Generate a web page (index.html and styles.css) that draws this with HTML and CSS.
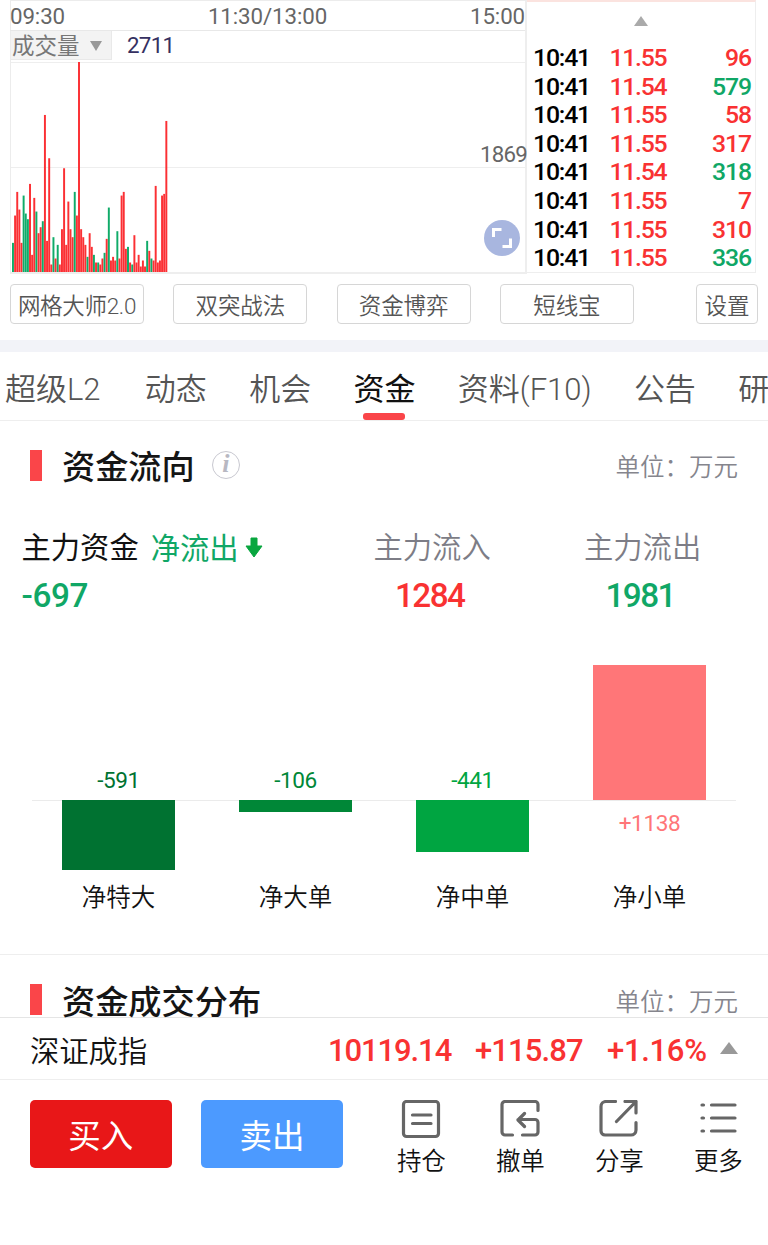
FILE: index.html
```html
<!DOCTYPE html>
<html lang="zh-CN">
<head>
    <meta charset="utf-8">
    <meta name="viewport" content="width=device-width, initial-scale=1">
    <title>资金</title>
    <link rel="stylesheet" href="styles.css">
</head>
<body>
<div class="quote">
    <div class="chart">
        <div class="axis"><span>09:30</span><span>11:30/13:00</span><span>15:00</span></div>
        <div class="vol-head">
            <div class="vol-select">成交量<i class="tri down"></i></div>
            <span class="vol-now">2711</span>
        </div>
        <div class="vol-plot">
            <svg class="vol-bars" id="volBars" viewBox="0 0 155.500 632" preserveAspectRatio="none"></svg>
            <span class="vol-mid">1869</span>
            <div class="expand">
                <svg width="20" height="20" viewBox="0 0 20 20"><path d="M1.500 9V1.500H9.500M18.500 10.500V18.500H10.500" fill="none" stroke="#fff" stroke-width="3"/></svg>
            </div>
        </div>
    </div>
    <div class="ticks">
        <div class="ticks-up"><i class="tri up"></i></div>
        <div class="tick"><span>10:41</span><b>11.55</b><em class="red">96</em></div>
        <div class="tick"><span>10:41</span><b>11.54</b><em class="green">579</em></div>
        <div class="tick"><span>10:41</span><b>11.55</b><em class="red">58</em></div>
        <div class="tick"><span>10:41</span><b>11.55</b><em class="red">317</em></div>
        <div class="tick"><span>10:41</span><b>11.54</b><em class="green">318</em></div>
        <div class="tick"><span>10:41</span><b>11.55</b><em class="red">7</em></div>
        <div class="tick"><span>10:41</span><b>11.55</b><em class="red">310</em></div>
        <div class="tick"><span>10:41</span><b>11.55</b><em class="green">336</em></div>
    </div>
</div>

<div class="tools">
    <div class="tool">网格大师2.0</div>
    <div class="tool">双突战法</div>
    <div class="tool">资金博弈</div>
    <div class="tool">短线宝</div>
    <div class="tool setting">设置</div>
</div>

<div class="tabs">
    <div class="tab">超级L2</div>
    <div class="tab">动态</div>
    <div class="tab">机会</div>
    <div class="tab active">资金</div>
    <div class="tab">资料(F10)</div>
    <div class="tab">公告</div>
    <div class="tab">研</div>
</div>

<div class="section flow">
    <div class="section-head">
        <h2>资金流向</h2>
        <div class="info">i</div>
        <span class="unit">单位：万元</span>
    </div>
    <div class="summary">
        <div class="main-net">
            <div class="label">主力资金<span class="net-out">净流出</span><svg width="18" height="21" viewBox="0 0 18 21"><path d="M6 1h6v8h5L9 20 1 9h5z" fill="#08a63f" stroke="#08a63f" stroke-linejoin="round"/></svg></div>
            <div class="num green">-697</div>
        </div>
        <div class="main-in">
            <div class="label">主力流入</div>
            <div class="num red">1284</div>
        </div>
        <div class="main-out">
            <div class="label">主力流出</div>
            <div class="num green">1981</div>
        </div>
    </div>
    <div class="bars">
        <div class="col neg c1"><span>-591</span><div class="bar" style="height:70px"></div></div>
        <div class="col neg c2"><span>-106</span><div class="bar" style="height:12.500px"></div></div>
        <div class="col neg c3"><span>-441</span><div class="bar" style="height:52.500px"></div></div>
        <div class="col pos c4"><div class="bar" style="height:134.500px"></div><span>+1138</span></div>
    </div>
    <div class="bar-names"><span>净特大</span><span>净大单</span><span>净中单</span><span>净小单</span></div>
</div>

<div class="section dist">
    <div class="section-head">
        <h2>资金成交分布</h2>
        <span class="unit">单位：万元</span>
    </div>
</div>

<div class="index-bar">
    <span class="index-name">深证成指</span>
    <span class="index-price">10119.14</span>
    <span class="index-diff">+115.87</span>
    <span class="index-pct">+1.16%</span>
    <i class="tri up"></i>
</div>

<div class="actions">
    <div class="btn buy">买入</div>
    <div class="btn sell">卖出</div>
    <div class="act">
        <svg viewBox="0 0 40 40"><rect x="2.500" y="1.500" width="35" height="35" rx="3"/><path d="M11.500 15H30M11.500 23.500H30"/></svg>
        <span>持仓</span>
    </div>
    <div class="act">
        <svg viewBox="0 0 40 40"><path d="M38 10.500V4.500a3 3 0 0 0-3-3H5a3 3 0 0 0-3 3V32a3 3 0 0 0 3 3h7.500M22.500 35H35a3 3 0 0 0 3-3V22.500a3 3 0 0 0-3-3H18M24.500 13.500L18 20l6.500 6.500"/></svg>
        <span>撤单</span>
    </div>
    <div class="act">
        <svg viewBox="0 0 40 40"><path d="M16.500 1.500H7a5 5 0 0 0-5 5V31a4 4 0 0 0 4 4H32a5 5 0 0 0 5-5V22.500M26 1.500H37V13M37 1.500L17.500 21.500"/></svg>
        <span>分享</span>
    </div>
    <div class="act">
        <svg viewBox="0 0 40 40"><path d="M4 5h1.500M13.500 5H37M4 18h1.500M13.500 18H37M4 31h1.500M13.500 31H37"/></svg>
        <span>更多</span>
    </div>
</div>

<script type="text/javascript">
    // one entry per bar, negative = falling (green)
    var volumes = [
        -89,171,242,189,89,-231,-177,-160,266,53,224,-183,118,136,-154,473,95,343,24,-106,
        42,-83,24,130,313,83,213,130,106,-242,171,632,130,106,83,-47,118,77,-53,30,
        -30,24,42,-59,101,-195,36,47,36,-124,42,231,242,71,-77,30,-24,112,30,53,
        18,36,18,-95,65,-42,36,260,30,36,231,236,455
    ];
    var step = 2.13;
    document.getElementById('volBars').innerHTML = volumes.map(function(v, i){
        var h = Math.abs(v);
        return '<rect class="' + (v < 0 ? 'fall' : 'rise') + '" x="' + (i * step).toFixed(2) + '" y="' + (632 - h) + '" width="1.95" height="' + h + '"/>';
    }).join('');
</script>
</body>
</html>
```
FILE: styles.css
```css
* {box-sizing:border-box;}
body {margin:0; width:768px; height:1245px; overflow:hidden; background:#fff; color:#111; font-family:Roboto,"Noto Sans CJK SC",sans-serif; font-size:24.5px; white-space:nowrap;}
i, em {font-style:normal;}
.red {color:#f93232;}
.green {color:#10a766;}
.tri {display:inline-block; border:7px solid transparent;}
.tri.up {border-top:0; border-bottom:10px solid #aaa;}
.tri.down {border-bottom:0; border-top:10px solid #999;}

.quote {display:flex; height:274px; padding-left:10px;}
.chart {width:517px; border:1px solid #ececec; border-right:2px solid #eee; border-bottom:2px solid #eee;}
.axis {display:flex; justify-content:space-between; height:30px; line-height:31px; font-size:22.3px; letter-spacing:-.1px; color:#666; border-bottom:1px solid #e8e8e8; margin:0 0 0 -1px;}
.vol-head {display:flex; height:32px; border-bottom:1px solid #eee;}
.vol-select {width:101px; height:29px; background:#f3f3f3; border-right:1px solid #e9e9e9; border-bottom:1px solid #e9e9e9; line-height:30px; font-size:22.5px; color:#777; padding-left:1px;}
.vol-select .tri {margin-left:10px; border-left-width:6px; border-right-width:6px; vertical-align:3px;}
.vol-now {margin-left:15px; line-height:29px; font-size:22.3px; font-weight:450; letter-spacing:-.7px; color:#353061;}
.vol-plot {position:relative; height:209px; background:linear-gradient(#eee,#eee) 0 104px/100% 1px no-repeat;}
.vol-bars {position:absolute; left:1px; bottom:0; width:155.500px; height:210.500px;}
.rise {fill:#fb3034;}
.fall {fill:#10ab69;}
.vol-mid {position:absolute; right:-2px; top:77px; line-height:28px; font-size:22.3px; letter-spacing:-.8px; color:#666;}
.expand {position:absolute; right:5px; top:157px; width:36px; height:36px; border-radius:50%; background:#a8b6df; display:flex; align-items:center; justify-content:center;}

.ticks {width:229px; border-top:2px solid #fbe3df; border-right:1px solid #eee; border-bottom:1px solid #eee; padding:0 4px 0 6px; height:273px;}
.ticks-up {height:42px; padding:14px 0 0 101px; line-height:0;}
.tick {display:flex; height:28.600px; line-height:28px; font-size:24.8px; font-weight:500;}
.tick span {width:76.500px; letter-spacing:-1.2px; color:#000;}
.tick b {font-weight:500; letter-spacing:-1.3px; color:#f93232;}
.tick em {margin-left:auto; letter-spacing:-1.1px;}

.tools {display:flex; gap:29.300px; padding:10px 10px 0; height:65.500px;}
.tool {width:134px; height:40px; border:1.500px solid #d6d6d6; border-radius:4px; text-align:center; line-height:42px; font-size:22.5px; font-weight:350; letter-spacing:-.1px; color:#555;}
.tool:first-child {letter-spacing:-.3px;}
.setting {width:62px; margin-left:auto;}

.tabs {display:flex; gap:42.300px; height:81px; border-top:12px solid #f2f3f8; border-bottom:1px solid #eee; padding-left:5px;}
.tab {flex:none; display:flex; flex-direction:column; align-items:center; line-height:75px; height:68px; font-size:31px; font-weight:350; color:#555;}
.tab:first-child {margin-right:2px;}
.tab.active {color:#111; font-weight:400;}
.active::after {content:""; width:42px; height:7px; border-radius:3px; background:#fa4549; margin-top:-14px;}

.section-head {display:flex; align-items:center; padding:0 30px; height:32px;}
.section-head::before {content:""; width:12px; height:31px; background:#fa4549; margin-right:20px;}
h2 {margin:0; font-size:33.2px; font-weight:500; line-height:36px; padding-top:6px; color:#151515;}
.info {width:28px; height:28px; margin-left:17px; border:1.500px solid #c8c8d0; border-radius:50%; text-align:center; font:italic bold 26px/24px "Liberation Serif",serif; color:#b8b8c2;}
.unit {margin-left:auto; padding-top:1px; font-weight:350; color:#85858d;}
.flow {height:534px; padding-top:28.500px; border-bottom:1px solid #eee;}
.summary {display:flex; padding:47.500px 21.500px 0; font-size:29.3px;}
.label {display:flex; align-items:center; height:38px; line-height:38px;}
.net-out {color:#10a766; margin:2px 6px 0 12px;}
.main-net {width:352px;}
.main-in {width:210.500px;}
.main-in .label, .main-out .label {font-weight:350; color:#7d7d86;}
.num {font-size:33.3px; line-height:57px; font-weight:500; letter-spacing:-.4px;}
.main-in .num, .main-out .num {padding-left:21.500px; letter-spacing:-1.6px;}
.bars {display:grid; grid-template-columns:repeat(4,177px); margin:39px 30px 0; height:208px; background:linear-gradient(#ebebeb,#ebebeb) 2px 137px/704px 1px no-repeat;}
.col {display:flex; flex-direction:column; align-items:center;}
.col span {font-size:22.6px; line-height:30px; letter-spacing:-.4px; font-weight:450;}
.bar {width:113.300px; background:currentColor;}
.neg {padding-top:103px;}
.neg .bar {margin-top:4px;}
.pos {padding-top:2.500px;}
.pos span {margin-top:9px;}
.c1 {color:#007231;}
.c2 {color:#008737;}
.c3 {color:#00a541;}
.c4 {color:#ff7678;}
.bar-names {display:grid; grid-template-columns:repeat(4,177px); margin:9px 30px 0; line-height:36px; text-align:center; font-weight:350;}

.dist {height:62.500px; padding-top:29px;}
.index-bar {display:flex; align-items:center; height:63px; padding:3px 30px 0; border-top:1px solid #e5e5e5; border-bottom:1px solid #eee; font-size:31px; font-weight:500; color:#f93232;}
.index-name {width:298px; margin-top:-3px; font-size:29.3px; font-weight:350; color:#111;}
.index-price {width:147px; letter-spacing:-1.1px;}
.index-diff {width:132px; letter-spacing:-.9px;}
.index-pct {letter-spacing:-.3px;}
.index-bar .tri {margin:-4px 0 0 auto; border-left-width:9px; border-right-width:9px; border-bottom:12px solid #999;}

.actions {display:flex; padding:19.500px 0 0 30px;}
.btn {width:141.500px; height:68.500px; margin-right:29.700px; border-radius:5px; color:#fff; font-size:32.5px; line-height:74px; text-align:center;}
.buy {background:#e81718;}
.sell {background:#4c9aff;}
.act {width:99px; display:flex; flex-direction:column; align-items:center; line-height:36px; font-weight:350;}
.sell + .act {margin-left:-.5px;}
.act svg {width:40px; height:40px; margin:0 0 4px; fill:none; stroke:#666; stroke-width:3.2; stroke-linecap:round; stroke-linejoin:round;}
```
